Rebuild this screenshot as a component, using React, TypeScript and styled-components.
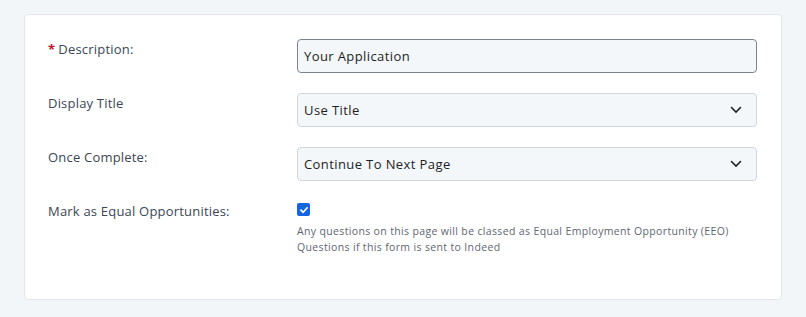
import React from 'react';
import styled, { createGlobalStyle } from 'styled-components';

const GlobalStyle = createGlobalStyle`
  html, body {
    margin: 0;
    background: #f3f6f9;
    font-family: 'Open Sans', 'Noto Sans', sans-serif;
  }
`;

const Page = styled.div`
  padding: 14px 24px 18px 24px;
`;

const Card = styled.div`
  background: #ffffff;
  border: 1px solid #e3e7ec;
  border-radius: 4px;
  padding: 24px 24px 44px 23px;
`;

const FormRow = styled.div`
  display: grid;
  grid-template-columns: 249px 1fr;
  margin-bottom: 20px;
  &:last-child {
    margin-bottom: 0;
  }
`;

const Label = styled.label`
  font-size: 13px;
  letter-spacing: 0.2px;
  line-height: 20px;
  color: #3b4656;
  display: flex;
  align-items: center;
  height: 20px;
`;

const Required = styled.span`
  color: #c0172f;
  font-weight: 700;
  margin-right: 3px;
`;

const Field = styled.div<{ $focused?: boolean }>`
  height: 34px;
  box-sizing: border-box;
  border: 1px solid ${(p) => (p.$focused ? '#7b8391' : '#cfd6de')};
  border-radius: 4px;
  background: #f4f7fa;
  display: flex;
  align-items: center;
  padding: 0 14px 0 6px;
  font-size: 13px;
  letter-spacing: 0.4px;
  color: #1c1f24;
`;

const FieldText = styled.span`
  flex: 1;
`;

const CheckCol = styled.div`
  display: flex;
  flex-direction: column;
`;

const Check = styled.span`
  width: 13px;
  height: 13px;
  border-radius: 2px;
  background: #1565e0;
  display: flex;
  align-items: center;
  justify-content: center;
  margin-top: 2px;
`;

const Help = styled.p`
  margin: 7px 0 0 0;
  font-size: 10.5px;
  letter-spacing: 0.35px;
  line-height: 16px;
  color: #5f6672;
`;

const Chevron = () => (
  <svg width="12" height="8" viewBox="0 0 12 8">
    <path d="M1.5 1.5 L6 6 L10.5 1.5" stroke="#1c1f24" strokeWidth="1.6" fill="none" strokeLinecap="round" />
  </svg>
);

export default function App() {
  return (
    <Page>
      <GlobalStyle />
      <Card>
        <FormRow>
          <Label>
            <Required>*</Required>Description:
          </Label>
          <Field $focused>
            <FieldText>Your Application</FieldText>
          </Field>
        </FormRow>
        <FormRow>
          <Label>Display Title</Label>
          <Field>
            <FieldText>Use Title</FieldText>
            <Chevron />
          </Field>
        </FormRow>
        <FormRow>
          <Label>Once Complete:</Label>
          <Field>
            <FieldText>Continue To Next Page</FieldText>
            <Chevron />
          </Field>
        </FormRow>
        <FormRow>
          <Label>Mark as Equal Opportunities:</Label>
          <CheckCol>
            <Check>
              <svg width="10" height="10" viewBox="0 0 10 10">
                <path d="M2 5.2 L4.2 7.3 L8.2 2.8" stroke="#fff" strokeWidth="1.7" fill="none" strokeLinecap="round" strokeLinejoin="round" />
              </svg>
            </Check>
            <Help>
              Any questions on this page will be classed as Equal Employment Opportunity (EEO)
              <br />
              Questions if this form is sent to Indeed
            </Help>
          </CheckCol>
        </FormRow>
      </Card>
    </Page>
  );
}
